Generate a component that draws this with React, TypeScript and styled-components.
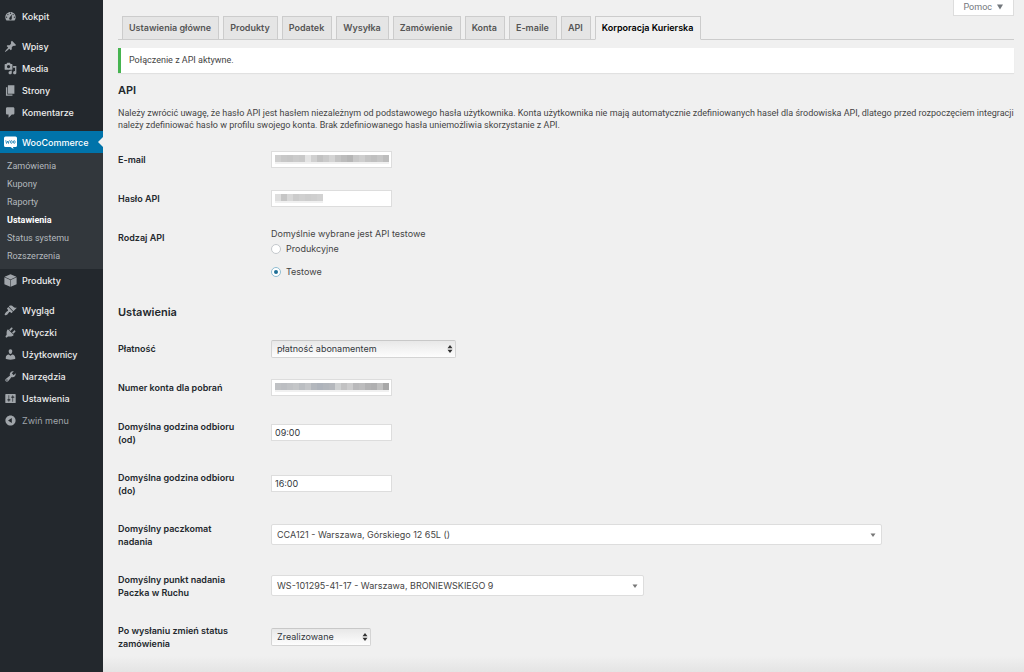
import React from "react";
import styled, { createGlobalStyle, css } from "styled-components";

const GlobalStyle = createGlobalStyle`
  *, *::before, *::after { box-sizing: border-box; }
  body {
    margin: 0;
    background: #f0f0f0;
    color: #444;
    font-family: Inter, "Liberation Sans", sans-serif;
    font-size: 9px;
    line-height: 13px;
  }
  input, select, button { font-family: inherit; font-size: inherit; color: inherit; }
`;

const smallText = css`
  font-family: Roboto, "Liberation Sans", sans-serif;
  font-size: 9px;
`;

const Page = styled.div`
  display: flex;
  min-height: 100vh;
`;

/* ---------- sidebar ---------- */

const Sidebar = styled.nav`
  flex: 0 0 103px;
  background: #23282d;
  padding-top: 5px;
`;

const MenuGroup = styled.ul`
  list-style: none;
  margin: 0 0 8px;
  padding: 0;
`;

const menuRow = css`
  display: flex;
  align-items: center;
  gap: 5px;
  width: 100%;
  height: 22px;
  padding: 0 0 0 4px;
  border: 0;
  font-size: 9px;
  font-weight: 500;
  text-decoration: none;
  white-space: nowrap;
`;

const MenuLink = styled.a<{ $current?: boolean }>`
  ${menuRow}
  position: relative;
  color: ${(p) => (p.$current ? "#fff" : "#eee")};
  background: ${(p) => (p.$current ? "#0073aa" : "transparent")};
  ${(p) =>
    p.$current &&
    css`
      &::after {
        content: "";
        position: absolute;
        right: 0;
        top: 6px;
        border: 5px solid transparent;
        border-left-width: 0;
        border-right-color: #f0f0f0;
      }
    `}
`;

const CollapseButton = styled.button`
  ${menuRow}
  background: transparent;
  color: #a0a5aa;
  font-weight: 400;
`;

const MenuIcon = styled.svg<{ $active?: boolean }>`
  flex: none;
  width: 13px;
  height: 13px;
  fill: ${(p) => (p.$active ? "#fff" : "#a0a5aa")};
`;

const Submenu = styled.ul`
  list-style: none;
  margin: 0;
  padding: 4px 0;
  background: #32373c;
`;

const SubmenuLink = styled.a<{ $current?: boolean }>`
  ${smallText}
  display: block;
  padding-left: 7px;
  line-height: 18px;
  text-decoration: none;
  color: ${(p) => (p.$current ? "#fff" : "#b4b9be")};
  font-weight: ${(p) => (p.$current ? 700 : 400)};
`;

const ICONS = {
  dashboard:
    "M3.76 16h12.48c1.1-1.37 1.76-3.11 1.76-5 0-4.42-3.58-8-8-8s-8 3.58-8 8c0 1.89.66 3.63 1.76 5zM10 4c.55 0 1 .45 1 1s-.45 1-1 1-1-.45-1-1 .45-1 1-1zM6 6c.55 0 1 .45 1 1s-.45 1-1 1-1-.45-1-1 .45-1 1-1zm8 0c.55 0 1 .45 1 1s-.45 1-1 1-1-.45-1-1 .45-1 1-1zm-5.37 5.55L12 7v6c0 1.1-.9 2-2 2s-2-.9-2-2c0-.57.24-1.08.63-1.45zM4 10c.55 0 1 .45 1 1s-.45 1-1 1-1-.45-1-1 .45-1 1-1zm12 0c.55 0 1 .45 1 1s-.45 1-1 1-1-.45-1-1 .45-1 1-1z",
  post: "M10.44 3.02l1.82-1.82 6.36 6.35-1.83 1.82c-1.05-.68-2.48-.57-3.41.36l-.75.75c-.92.93-1.04 2.35-.35 3.41l-1.83 1.82-2.41-2.41-2.8 2.79c-.42.42-3.38 2.71-3.8 2.29s1.86-3.39 2.28-3.81l2.79-2.79L4.1 9.36l1.83-1.82c1.05.69 2.48.57 3.4-.36l.75-.75c.93-.92 1.05-2.35.36-3.41z",
  media:
    "M13 11V4c0-.55-.45-1-1-1h-1.67L9 1H5L3.67 3H2c-.55 0-1 .45-1 1v7c0 .55.45 1 1 1h10c.55 0 1-.45 1-1zM7 4.5c1.38 0 2.5 1.12 2.5 2.5S8.38 9.5 7 9.5 4.5 8.38 4.5 7 5.62 4.5 7 4.5zM14 6h5v10.5c0 1.38-1.12 2.5-2.5 2.5S14 17.88 14 16.5s1.12-2.5 2.5-2.5c.17 0 .34.02.5.05V9h-3V6zm-4 8.05V13h2v3.5c0 1.38-1.12 2.5-2.5 2.5S7 17.88 7 16.5 8.12 14 9.5 14c.17 0 .34.02.5.05z",
  page: "M6 15V2h10v13H6zm-1 1h8v2H3V5h2v11z",
  comments:
    "M5 2h9c1.1 0 2 .9 2 2v7c0 1.1-.9 2-2 2h-2l-5 5v-5H5c-1.1 0-2-.9-2-2V4c0-1.1.9-2 2-2z",
  product:
    "M10 .2L19 4.200 10 8.400 1 4.200zM.6 5.100L9.600 9.200v10.600L.6 15.600zM19.400 5.100v10.500l-9 4.200V9.200z",
  appearance:
    "M14.48 11.06L7.41 3.99l1.5-1.5c.5-.56 2.3-.47 3.51.32 1.21.8 1.43 1.28 2.91 2.1 1.18.64 2.45 1.26 4.45.85zm-.71.71L6.7 4.7 4.93 6.47c-.39.39-.39 1.02 0 1.41l1.06 1.06c.39.39.39 1.03 0 1.42-.6.6-1.43 1.11-2.21 1.69-.35.26-.7.53-1.01.84C1.43 14.23.4 16.08 1.4 17.07c.99 1 2.84-.03 4.18-1.36.31-.31.58-.66.85-1.02.57-.78 1.08-1.61 1.69-2.21.39-.39 1.02-.39 1.41 0l1.06 1.06c.39.39 1.02.39 1.41 0z",
  plugins:
    "M13.11 4.36L9.87 7.6 8 5.73l3.24-3.24c.35-.34 1.05-.2 1.56.32.52.51.66 1.21.31 1.55zm-8 1.77l.91-1.12 9.01 9.01-1.19.84c-.71.71-2.63 1.16-3.82 1.16H6.14L4.9 17.26c-.59.59-1.54.59-2.12 0-.59-.58-.59-1.53 0-2.12l1.24-1.24v-3.88c0-1.13.4-3.19 1.09-3.89zm7.26 3.97l3.24-3.24c.34-.35 1.04-.21 1.55.31.52.51.66 1.21.31 1.55l-3.24 3.25z",
  users:
    "M10 9.25c-2.27 0-2.73-3.44-2.73-3.44C7 4.02 7.82 2 9.97 2c2.16 0 2.98 2.02 2.71 3.81 0 0-.41 3.44-2.68 3.44zm0 2.57L12.72 10c2.39 0 4.52 2.33 4.52 4.53v2.49s-3.65 1.13-7.24 1.13c-3.65 0-7.24-1.13-7.24-1.13v-2.49c0-2.25 1.94-4.48 4.47-4.48z",
  tools:
    "M16.68 9.77c-1.34 1.34-3.3 1.67-4.95.99l-5.41 6.52c-.99.99-2.59.99-3.58 0s-.99-2.59 0-3.57l6.52-5.42c-.68-1.65-.35-3.61.99-4.95 1.28-1.28 3.12-1.62 4.72-1.06l-2.89 2.89 2.82 2.82 2.86-2.87c.53 1.58.18 3.39-1.08 4.65zM3.81 16.21c.4.39 1.04.39 1.43 0 .4-.4.4-1.04 0-1.43-.39-.4-1.03-.4-1.43 0-.39.39-.39 1.03 0 1.43z",
  settings:
    "M18 16V4c0-.55-.45-1-1-1H3c-.55 0-1 .45-1 1v12c0 .55.45 1 1 1h14c.55 0 1-.45 1-1zM8 11h1c.55 0 1 .45 1 1s-.45 1-1 1H8v1.5c0 .28-.22.5-.5.5s-.5-.22-.5-.5V13H6c-.55 0-1-.45-1-1s.45-1 1-1h1V5.5c0-.28.22-.5.5-.5s.5.22.5.5V11zm5-2h-1c-.55 0-1-.45-1-1s.45-1 1-1h1V5.5c0-.28.22-.5.5-.5s.5.22.5.5V7h1c.55 0 1 .45 1 1s-.45 1-1 1h-1v5.5c0 .28-.22.5-.5.5s-.5-.22-.5-.5V9z",
  collapse:
    "M10 2.16c4.33 0 7.84 3.51 7.84 7.84s-3.51 7.84-7.84 7.84S2.16 14.33 2.16 10 5.67 2.16 10 2.16zm2 11.72V6.12L6.18 9.97z",
};

type IconName = keyof typeof ICONS;

const Icon = ({ name }: { name: IconName }) => (
  <MenuIcon viewBox="0 0 20 20" aria-hidden="true">
    <path fillRule="evenodd" d={ICONS[name]} />
  </MenuIcon>
);

const WooIcon = () => (
  <MenuIcon $active viewBox="0 0 26 26" aria-hidden="true">
    <path d="M3 1h20a3 3 0 0 1 3 3v15a3 3 0 0 1-3 3h-5l1 4-6-4H3a3 3 0 0 1-3-3V4a3 3 0 0 1 3-3z" />
    <g fill="none" stroke="#0073aa" strokeWidth="1.400" strokeLinejoin="round">
      <path d="M3.500 8.500l1.500 6.500 2.500-5 1.500 5c.2-2.800.8-4.800 2-6.500" />
      <ellipse cx="14.800" cy="12" rx="1.800" ry="2.800" />
      <ellipse cx="20.500" cy="12" rx="1.800" ry="2.800" />
    </g>
  </MenuIcon>
);

const MenuItem = ({ icon, label }: { icon: IconName; label: string }) => (
  <li>
    <MenuLink href="#">
      <Icon name={icon} />
      {label}
    </MenuLink>
  </li>
);

const SUBMENU = ["Zamówienia", "Kupony", "Raporty", "Ustawienia", "Status systemu", "Rozszerzenia"];

/* ---------- content ---------- */

const Main = styled.main`
  flex: 1;
  min-width: 0;
  padding: 0 10px 10px 15px;
  background: linear-gradient(to top, #e4e4e4, #f0f0f0 16px);
`;

const HelpBar = styled.div`
  display: flex;
  justify-content: flex-end;
  height: 16px;
`;

const HelpButton = styled.button`
  ${smallText}
  display: flex;
  align-items: center;
  gap: 5px;
  height: 16px;
  padding: 0 10px 2px;
  background: #fff;
  border: 1px solid #ddd;
  border-top: 0;
  color: #72777c;
`;

const HelpArrow = styled.svg`
  width: 6px;
  height: 6px;
  fill: #72777c;
`;

const Tabs = styled.nav`
  display: flex;
  gap: 4px;
  padding-left: 4px;
  border-bottom: 1px solid #ccc;
`;

const Tab = styled.a<{ $current?: boolean }>`
  height: 24px;
  margin-bottom: -1px;
  padding: 0 7px 0 6px;
  border: 1px solid #ccc;
  border-bottom-color: ${(p) => (p.$current ? "#f0f0f0" : "#ccc")};
  background: ${(p) => (p.$current ? "#f0f0f0" : "#e5e5e5")};
  color: ${(p) => (p.$current ? "#000" : "#555")};
  font-size: 9px;
  font-weight: 600;
  line-height: 22px;
  text-decoration: none;
  white-space: nowrap;
`;

const Notice = styled.div`
  ${smallText}
  margin-top: 8px;
  padding: 6px 8px;
  background: #fff;
  border-left: 3px solid #46b450;
  box-shadow: 0 1px 1px rgba(0, 0, 0, 0.06);
`;

const Heading = styled.h2`
  margin: 0;
  color: #23282d;
  font-size: 11px;
  font-weight: 600;
  line-height: 16px;
`;

const Section = styled.section`
  padding-top: 9px;
`;

const SettingsSection = styled.section`
  ${Heading} {
    margin-bottom: 9px;
  }
`;

const Intro = styled.p`
  ${smallText}
  margin: 9px 0;
  line-height: 12px;
`;

const Row = styled.div`
  display: grid;
  grid-template-columns: 153px minmax(0, 1fr);
  align-items: center;
  min-height: 39px;
`;

const rowLabel = css`
  align-self: start;
  padding: 13px 28px 12px 0;
  color: #23282d;
  font-size: 9px;
  font-weight: 600;
  line-height: 13px;
`;

const RowLabel = styled.label`
  ${rowLabel}
`;

const RowTitle = styled.div`
  ${rowLabel}
`;

const InputWrap = styled.div`
  position: relative;
  width: 121px;
`;

const TextInput = styled.input`
  display: block;
  width: 100%;
  height: 17px;
  padding: 0 3px;
  background: #fff;
  border: 1px solid #ddd;
  border-radius: 0;
  color: #32373c;
  font-size: 9px;
`;

const Mosaic = styled.div`
  position: absolute;
  left: 4px;
  top: 4px;
  display: flex;
  pointer-events: none;
`;

const MosaicCell = styled.span<{ $shade: string }>`
  width: 6px;
  height: 7px;
  background: ${(p) => p.$shade};
  box-shadow: 0 2px 0 #f0f0f0;
`;

const SelectWrap = styled.div<{ $width: number }>`
  position: relative;
  width: ${(p) => p.$width}px;
  max-width: 100%;
`;

const NativeSelect = styled.select`
  appearance: none;
  display: block;
  width: 100%;
  height: 18px;
  padding: 0 16px 0 5px;
  border: 1px solid #d4d4d4;
  border-top-color: #c8c8c8;
  border-radius: 2px;
  background: linear-gradient(#e8e8e8, #fdfdfd);
  color: #32373c;
  font-size: 9px;
`;

const SearchSelect = styled.select`
  appearance: none;
  display: block;
  width: 100%;
  height: 21px;
  padding: 0 16px 0 5px;
  border: 1px solid #ddd;
  border-radius: 2px;
  background: #fff;
  color: #444;
  font-size: 9px;
`;

const SelectArrow = styled.svg`
  position: absolute;
  right: 3px;
  top: 50%;
  width: 6px;
  height: 10px;
  margin-top: -5px;
  fill: #333;
  pointer-events: none;
`;

const SearchArrow = styled(SelectArrow)`
  right: 6px;
  fill: #777;
`;

const Radios = styled.fieldset`
  margin: 0;
  padding: 9px 0 21px;
  border: 0;
  min-width: 0;
`;

const RadioHint = styled.div`
  color: #444;
`;

const RadioLabel = styled.label`
  display: flex;
  align-items: center;
  gap: 5px;
  height: 23px;
  &:first-of-type {
    margin-top: -3px;
  }
`;

const Radio = styled.input`
  appearance: none;
  display: grid;
  place-items: center;
  width: 10px;
  height: 10px;
  margin: 0;
  border: 1px solid #c4c8cc;
  border-radius: 50%;
  background: #fff;
  &:checked {
    border-color: #8fbdd2;
  }
  &:checked::before {
    content: "";
    width: 4px;
    height: 4px;
    border-radius: 50%;
    background: #1e6f97;
  }
`;

const MASKS: Record<string, string[]> = {
  email: ["#cfcfcf", "#c8c8c8", "#c6c6c6", "#cbcbcb", "#c9c9c9", "#e4e4e4", "#d0d0d0", "#c2c2c2", "#cacaca", "#d4d4d4", "#c4c4c4", "#bcbcbc", "#b6b6b6", "#c8c8c8", "#cecece", "#c4c4c4", "#c0c0c0", "#c6c6c6", "#bdbdbd"],
  password: ["#dedede", "#c6c6c6", "#d8d8d8", "#cccccc", "#d0d0d0", "#cdcdcd", "#cfcfcf", "#d2d2d2"],
  account: ["#bfc1c4", "#bcbec2", "#c0c2c5", "#c4c6c8", "#bbbec2", "#c3c5c8", "#b3b7bd", "#aeb3bb", "#b2b6bc", "#b5b8bd", "#cfd1d2", "#c2c2c3", "#cccccd", "#b9b9bb", "#bdbdbe", "#b3b3b4", "#b0b0b1", "#c0c0c0", "#a8a8a8"],
};

const MaskedField = ({ id, label, type = "text" }: { id: string; label: string; type?: string }) => (
  <Row>
    <RowLabel htmlFor={id}>{label}</RowLabel>
    <InputWrap>
      <TextInput id={id} type={type} />
      <Mosaic aria-hidden="true">
        {MASKS[id].map((shade, i) => (
          <MosaicCell key={i} $shade={shade} />
        ))}
      </Mosaic>
    </InputWrap>
  </Row>
);

const TextField = ({ id, label, value }: { id: string; label: string; value: string }) => (
  <Row>
    <RowLabel htmlFor={id}>{label}</RowLabel>
    <InputWrap>
      <TextInput id={id} type="text" defaultValue={value} />
    </InputWrap>
  </Row>
);

type SelectProps = { id: string; label: string; value: string; width: number };

const SelectField = ({ id, label, value, width }: SelectProps) => (
  <Row>
    <RowLabel htmlFor={id}>{label}</RowLabel>
    <SelectWrap $width={width}>
      <NativeSelect id={id}>
        <option>{value}</option>
      </NativeSelect>
      <SelectArrow viewBox="0 0 6 10" aria-hidden="true">
        <path d="M3 1l2.500 3.200h-5zM3 9L.5 5.800h5z" />
      </SelectArrow>
    </SelectWrap>
  </Row>
);

const SearchField = ({ id, label, value, width }: SelectProps) => (
  <Row>
    <RowLabel htmlFor={id}>{label}</RowLabel>
    <SelectWrap $width={width}>
      <SearchSelect id={id}>
        <option>{value}</option>
      </SearchSelect>
      <SearchArrow viewBox="0 0 6 10" aria-hidden="true">
        <path d="M.5 3.500h5L3 7z" />
      </SearchArrow>
    </SelectWrap>
  </Row>
);

const TABS = ["Ustawienia główne", "Produkty", "Podatek", "Wysyłka", "Zamówienie", "Konta", "E-maile", "API", "Korporacja Kurierska"];

export default function App() {
  return (
    <>
      <GlobalStyle />
      <Page>
        <Sidebar>
          <MenuGroup>
            <MenuItem icon="dashboard" label="Kokpit" />
          </MenuGroup>
          <MenuGroup>
            <MenuItem icon="post" label="Wpisy" />
            <MenuItem icon="media" label="Media" />
            <MenuItem icon="page" label="Strony" />
            <MenuItem icon="comments" label="Komentarze" />
          </MenuGroup>
          <MenuGroup>
            <li>
              <MenuLink href="#" $current>
                <WooIcon />
                WooCommerce
              </MenuLink>
              <Submenu>
                {SUBMENU.map((item) => (
                  <li key={item}>
                    <SubmenuLink href="#" $current={item === "Ustawienia"}>
                      {item}
                    </SubmenuLink>
                  </li>
                ))}
              </Submenu>
            </li>
            <MenuItem icon="product" label="Produkty" />
          </MenuGroup>
          <MenuGroup>
            <MenuItem icon="appearance" label="Wygląd" />
            <MenuItem icon="plugins" label="Wtyczki" />
            <MenuItem icon="users" label="Użytkownicy" />
            <MenuItem icon="tools" label="Narzędzia" />
            <MenuItem icon="settings" label="Ustawienia" />
            <li>
              <CollapseButton type="button">
                <Icon name="collapse" />
                Zwiń menu
              </CollapseButton>
            </li>
          </MenuGroup>
        </Sidebar>
        <Main>
          <HelpBar>
            <HelpButton type="button">
              Pomoc
              <HelpArrow viewBox="0 0 6 6" aria-hidden="true">
                <path d="M0 .5h6L3 5.500z" />
              </HelpArrow>
            </HelpButton>
          </HelpBar>
          <Tabs>
            {TABS.map((tab) => (
              <Tab key={tab} href="#" $current={tab === "Korporacja Kurierska"}>
                {tab}
              </Tab>
            ))}
          </Tabs>
          <Notice>Połączenie z API aktywne.</Notice>
          <Section>
            <Heading>API</Heading>
            <Intro>
              Należy zwrócić uwagę, że hasło API jest hasłem niezależnym od podstawowego hasła użytkownika. Konta
              użytkownika nie mają automatycznie zdefiniowanych haseł dla środowiska API, dlatego przed rozpoczęciem
              integracji należy zdefiniować hasło w profilu swojego konta. Brak zdefiniowanego hasła uniemożliwia
              skorzystanie z API.
            </Intro>
            <MaskedField id="email" label="E-mail" />
            <MaskedField id="password" label="Hasło API" type="password" />
            <Row>
              <RowTitle id="api-kind">Rodzaj API</RowTitle>
              <Radios aria-labelledby="api-kind">
                <RadioHint>Domyślnie wybrane jest API testowe</RadioHint>
                <RadioLabel>
                  <Radio type="radio" name="api" />
                  Produkcyjne
                </RadioLabel>
                <RadioLabel>
                  <Radio type="radio" name="api" defaultChecked />
                  Testowe
                </RadioLabel>
              </Radios>
            </Row>
          </Section>
          <SettingsSection>
            <Heading>Ustawienia</Heading>
            <SelectField id="payment" label="Płatność" value="płatność abonamentem" width={185} />
            <MaskedField id="account" label="Numer konta dla pobrań" />
            <TextField id="from" label="Domyślna godzina odbioru (od)" value="09:00" />
            <TextField id="to" label="Domyślna godzina odbioru (do)" value="16:00" />
            <SearchField id="locker" label="Domyślny paczkomat nadania" value="CCA121 - Warszawa, Górskiego 12 65L ()" width={611} />
            <SearchField
              id="point"
              label="Domyślny punkt nadania Paczka w Ruchu"
              value="WS-101295-41-17 - Warszawa, BRONIEWSKIEGO 9"
              width={373}
            />
            <SelectField id="status" label="Po wysłaniu zmień status zamówienia" value="Zrealizowane" width={100} />
          </SettingsSection>
        </Main>
      </Page>
    </>
  );
}
